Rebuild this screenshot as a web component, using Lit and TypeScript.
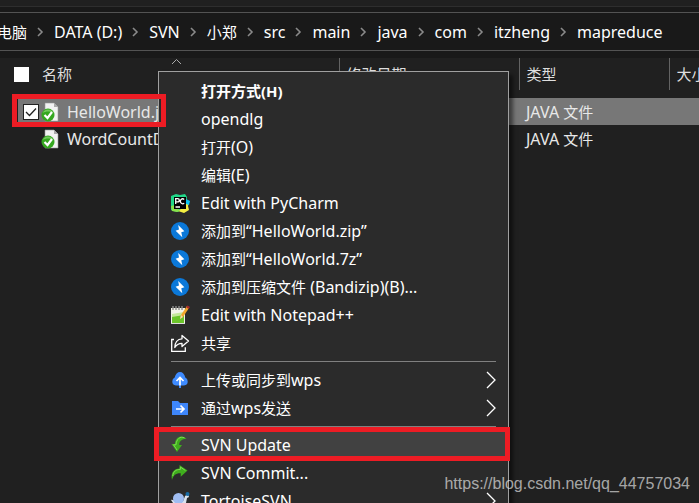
import { LitElement, html, css, svg, nothing } from "lit";
import { customElement } from "lit/decorators.js";
import { classMap } from "lit/directives/class-map.js";

interface MenuEntry {
  label: string;
  icon?: string;
  bold?: boolean;
  submenu?: boolean;
  current?: boolean;
}

// Han characters are set one step smaller than the Latin text beside them.
const mixed = (text: string) =>
  text
    .split(/([\u4e00-\u9fff]+)/)
    .filter(Boolean)
    .map((run) => (/[\u4e00-\u9fff]/.test(run) ? html`<span class="han">${run}</span>` : run));

const hanStyle = css`
  .han {
    font-size: 15px;
  }
`;

const bolt = svg`<circle cx="10" cy="10" r="9" fill="#0b78d8"/>
  <path d="M8 3.800 13.200 9 11.500 10l3.500 3.500L11 16.500 11.500 13.300 6 10.500 8.800 9.200z" fill="#fff" opacity="0"/>
  <path d="M8.200 4 14.400 10.200 11.300 11.300 12.300 16.200 5.600 9.800 9 8.600z" fill="#fff"/>`;

const icons: Record<string, unknown> = {
  pycharm: svg`<path d="M1 3 6 1l4 1 5-1 2 3-1 7-8 8-5-1-2-1z" fill="#21d789"/>
    <path d="M15 5l3 3 1 2-1 3 1 4-5 3-6-2 7-5z" fill="#f4ee42"/>
    <path d="M16 6l4 2-1 4-3-1z" fill="#07c3f2"/>
    <path d="M1 13l4-1 5 6-3 1-5-1z" fill="#8be04a"/>
    <rect x="4" y="4" width="12" height="12" fill="#000"/>
    <path d="M5.700 11V5.700h2a1.500 1.500 0 0 1 0 3.200h-2M14.200 6.400a2.400 2.400 0 1 0 0 3.800M5.500 14h4.500" fill="none" stroke="#fff" stroke-width="1.300"/>`,
  bandizip: bolt,
  notepad: svg`<path d="M1 3h14v16H1z" fill="#f3f3e8"/>
    <path d="M2 9l12-2v10H2z" fill="#c5e89a"/><path d="M2 12l12-2v8H2z" fill="#6cc52a"/>
    <path d="M1 18.500h14" stroke="#ddd"/>
    <path d="M3 1v4M6 1v4M9 1v4M12 1v4" stroke="#8d8d8d" stroke-width="1.400"/>
    <path d="M10 14l1-4 6-9 2 2-6 9z" fill="#f3a52a"/><path d="M10 14l1-4 2 2z" fill="#f3dbb0"/>
    <path d="M16 2l1.500-1.500L20 2l-1.500 2z" fill="#a52a2a"/>`,
  share: svg`<path d="M4 6.500H1.700v11.800h13.600v-4" fill="none" stroke="#fff" stroke-width="1.300"/>
    <path d="M12 2.500 18.500 8 12 13.500v-3.200c-4 0-5.600 1.200-7.200 4.200 0-5 2.700-8.500 7.200-8.700z" fill="none" stroke="#fff" stroke-width="1.300" stroke-linejoin="round"/>`,
  cloud: svg`<path d="M6 15.500a4 4 0 0 1-3.700-4.200A4 4 0 0 1 4.700 7.600C5.500 4 7.500 2 10 2s4.500 2 5.300 5.600a4 4 0 0 1 2.400 3.700A4 4 0 0 1 14 15.500z" fill="#3e8bff"/>
    <path d="M10 18V8M6.500 11 10 7.500l3.500 3.500" fill="none" stroke="#fff" stroke-width="1.700"/>
    <path d="M10 15.500V18" stroke="#3e8bff" stroke-width="2"/>`,
  folder: svg`<path d="M2 3h6l2 2h8v12H2z" fill="#3e86fa"/>
    <path d="M6 11h8M10.500 7.500 14 11l-3.500 3.500" fill="none" stroke="#fff" stroke-width="1.700"/>`,
  update: svg`<path d="M16.500 4C13-.5 5.500 1 4.800 9H1.500L7 17l5-7H9.200c0-4 3-6.500 7.300-6z" fill="#3fae1d"/>
    <path d="M14.500 2.800C10 1 6.500 4 6 9.800H3.500L7 15" fill="none" stroke="#7ddb50" stroke-width="1"/>`,
  commit: svg`<path d="M2 17C.5 9.500 4 5.500 9.500 5.500V2l8 5.500-6.800 6.300v-3.500C6 10 3.500 12 2 17z" fill="#3fae1d"/>
    <path d="M2.800 13c.4-4.500 3.200-6.600 7.600-6.600V4l5 3.500" fill="none" stroke="#7ddb50" stroke-width="1"/>`,
  tortoise: svg`<path d="M1 9c3-1 5 3 9 3 3 0 4-4 5-7l3-2 1 3-2 1-1 5 2 4-4-1-9 1-4-1 2-3z" fill="#d8e2ee"/>
    <circle cx="8.500" cy="7.500" r="5.500" fill="#a0bdf2"/><circle cx="17.500" cy="3" r="2" fill="#176ba5"/>`,
};

const menuGroups: MenuEntry[][] = [
  [
    { label: "打开方式(H)", bold: true },
    { label: "opendlg" },
    { label: "打开(O)" },
    { label: "编辑(E)" },
    { label: "Edit with PyCharm", icon: "pycharm" },
    { label: "添加到“HelloWorld.zip”", icon: "bandizip" },
    { label: "添加到“HelloWorld.7z”", icon: "bandizip" },
    { label: "添加到压缩文件 (Bandizip)(B)...", icon: "bandizip" },
    { label: "Edit with Notepad++", icon: "notepad" },
    { label: "共享", icon: "share" },
  ],
  [
    { label: "上传或同步到wps", icon: "cloud", submenu: true },
    { label: "通过wps发送", icon: "folder", submenu: true },
  ],
  [
    { label: "SVN Update", icon: "update", current: true },
    { label: "SVN Commit...", icon: "commit" },
    { label: "TortoiseSVN", icon: "tortoise", submenu: true },
  ],
];

@customElement("context-menu")
export class ContextMenu extends LitElement {
  static styles = [
    hanStyle,
    css`
      :host {
        display: block;
        box-sizing: border-box;
        width: 351px;
        padding-top: 5px;
        border: 1px solid #a0a0a0;
        background: #2b2b2b;
        box-shadow: 4px 4px 4px #00000080;
      }
      .item {
        position: relative;
        display: flex;
        align-items: center;
        width: 100%;
        height: 28px;
        padding: 0 12px 0 11px;
        border: 0;
        background: none;
        color: #fff;
        font: inherit;
        text-align: left;
        white-space: nowrap;
      }
      .bold {
        font-size: 15px;
        font-weight: 700;
      }
      .current { background: #414141; }
      .current::after {
        content: "";
        position: absolute;
        inset: -4px -2px -2px -5px;
        border: 5px solid #ed1c24;
      }
      .icon {
        flex: none;
        width: 20px;
        height: 20px;
        margin-right: 11px;
      }
      .label { flex: 1; }
      .arrow { width: 10px; height: 18px; }
      .rule {
        height: 1px;
        margin: 4px 12px;
        border: 0;
        background: #808080;
      }
    `,
  ];

  private entry(e: MenuEntry) {
    return html`<button
      class=${classMap({ item: true, bold: !!e.bold, current: !!e.current })}
      role="menuitem"
    >
      <svg class="icon" viewBox="0 0 20 20" aria-hidden="true">${e.icon ? icons[e.icon] : nothing}</svg>
      <span class="label">${mixed(e.label)}</span>
      ${e.submenu
        ? html`<svg class="arrow" viewBox="0 0 10 18" aria-hidden="true">
            <path d="M1 1l8 8-8 8" fill="none" stroke="#fff" stroke-width="1.300" />
          </svg>`
        : nothing}
    </button>`;
  }

  render() {
    return menuGroups.map(
      (group, i) => html`${i ? html`<hr class="rule" />` : nothing}${group.map((e) => this.entry(e))}`
    );
  }
}

@customElement("app-root")
export class AppRoot extends LitElement {
  static styles = [
    hanStyle,
    css`
      :host {
        position: relative;
        display: block;
        height: 100vh;
        overflow: hidden;
        background: #202020;
        color: #fff;
        font: 16px/20px "Noto Sans", "Noto Sans CJK SC", sans-serif;
      }
      .ribbon {
        height: 6px;
        border-bottom: 1px solid #2e2e2e;
      }
      .address {
        padding: 5px 0 7px;
        background: #191919;
      }
      .crumbs {
        display: flex;
        align-items: center;
        height: 37px;
        border: solid #535353;
        border-width: 1px 0;
        white-space: nowrap;
      }
      .crumb {
        color: inherit;
        text-decoration: none;
      }
      .first { margin-left: -3px; }
      .sep {
        flex: none;
        width: 27px;
        height: 10px;
      }
      .files {
        width: 100%;
        border-collapse: collapse;
        table-layout: fixed;
      }
      .files th, .files td {
        padding: 0 0 0 7px;
        font-weight: 400;
        text-align: left;
        white-space: nowrap;
        overflow: hidden;
      }
      .files th {
        height: 32px;
        border-right: 1px solid #636363;
        color: #dedede;
      }
      .files th:last-child { border-right: 0; }
      .files td { height: 27px; color: #e8e8e8; }
      .files .name { padding-left: 14px; }
      .name-col { width: 339px; }
      .date-col { width: 180px; }
      .type-col { width: 150px; }
      .gap td { height: 8px; }
      .selected { background: linear-gradient(90deg, #202020 18px, #777 18px); }
      .line { display: flex; align-items: center; }
      .tick {
        appearance: none;
        flex: none;
        box-sizing: border-box;
        width: 15px;
        height: 15px;
        margin: 0 13px 0 0;
        background: #fff;
      }
      .files .file { padding-left: 23px; }
      .file .tick {
        width: 16px;
        height: 16px;
        margin-right: 2px;
        border: 1px solid #222;
      }
      .box { position: relative; display: flex; }
      .check {
        position: absolute;
        left: 0;
        top: 0;
        width: 16px;
        height: 16px;
        pointer-events: none;
      }
      .hidden { visibility: hidden; }
      .doc {
        flex: none;
        width: 20px;
        height: 20px;
        margin-right: 6px;
      }
      .sort {
        position: absolute;
        left: 171px;
        top: 58px;
        width: 11px;
        height: 7px;
      }
      .menu {
        position: absolute;
        left: 158px;
        top: 71px;
      }
      .mark {
        position: absolute;
        left: 12px;
        top: 94px;
        width: 144px;
        height: 23px;
        border: 5px solid #ed1c24;
      }
      .watermark {
        position: absolute;
        right: 9px;
        bottom: 9px;
        color: #ffffff9c;
        font: 16px/20px "Liberation Sans", sans-serif;
      }
    `,
  ];

  private crumbs = ["电脑", "DATA (D:)", "SVN", "小郑", "src", "main", "java", "com", "itzheng", "mapreduce"];
  private files = [
    { name: "HelloWorld.j", selected: true },
    { name: "WordCountD", selected: false },
  ];

  render() {
    return html`
      <div class="ribbon"></div>
      <div class="address">
        <nav class="crumbs" aria-label="Path">
          ${this.crumbs.map(
            (c, i) => html`${i
                ? html`<svg class="sep" viewBox="0 0 27 10" aria-hidden="true">
                    <path d="M11 1l4 4-4 4" fill="none" stroke="#8a8a8a" stroke-width="1.600" />
                  </svg>`
                : nothing}<a class=${classMap({ crumb: true, first: i === 0 })} href="#">${mixed(c)}</a>`
          )}
        </nav>
      </div>
      <table class="files">
        <colgroup>
          <col class="name-col" /><col class="date-col" /><col class="type-col" /><col />
        </colgroup>
        <thead>
          <tr>
            <th class="name">
              <label class="line"><input class="tick" type="checkbox" />${mixed("名称")}</label>
            </th>
            <th>${mixed("修改日期")}</th>
            <th>${mixed("类型")}</th>
            <th>${mixed("大小")}</th>
          </tr>
        </thead>
        <tbody>
          <tr class="gap"><td colspan="4"></td></tr>
          ${this.files.map(
            (f) => html`<tr class=${classMap({ selected: f.selected })}>
              <td class="file">
                <label class="line">
                  <span class=${classMap({ box: true, hidden: !f.selected })}>
                    <input class="tick" type="checkbox" .checked=${f.selected} />
                    <svg class="check" viewBox="0 0 16 16" aria-hidden="true">
                      <path d="M3 8l3.500 3.500L13 4.500" fill="none" stroke="#222" stroke-width="1.300" />
                    </svg>
                  </span>
                  <svg class="doc" viewBox="0 0 20 20" aria-hidden="true">
                    <path d="M4 1h9l4 4v14H4z" fill="#f2f2f2" stroke="#999" stroke-width=".6" />
                    <path d="M13 1v4h4z" fill="#aaa" />
                    <circle cx="7" cy="13" r="6.500" fill="#35a720" />
                    <path d="M1.500 11a6 6 0 0 1 11 0c-4-2-7-2-11 0z" fill="#72c95c" />
                    <path d="M3.500 13l3 3 4.500-6" fill="none" stroke="#fff" stroke-width="2.200" />
                  </svg>
                  <span>${f.name}</span>
                </label>
              </td>
              <td></td>
              <td>${mixed("JAVA 文件")}</td>
              <td></td>
            </tr>`
          )}
        </tbody>
      </table>
      <svg class="sort" viewBox="0 0 11 7" aria-hidden="true">
        <path d="M1 6l4.500-4.500L10 6" fill="none" stroke="#aaa" />
      </svg>
      <context-menu class="menu" role="menu"></context-menu>
      <div class="mark"></div>
      <div class="watermark">https://blog.csdn.net/qq_44757034</div>
    `;
  }
}
